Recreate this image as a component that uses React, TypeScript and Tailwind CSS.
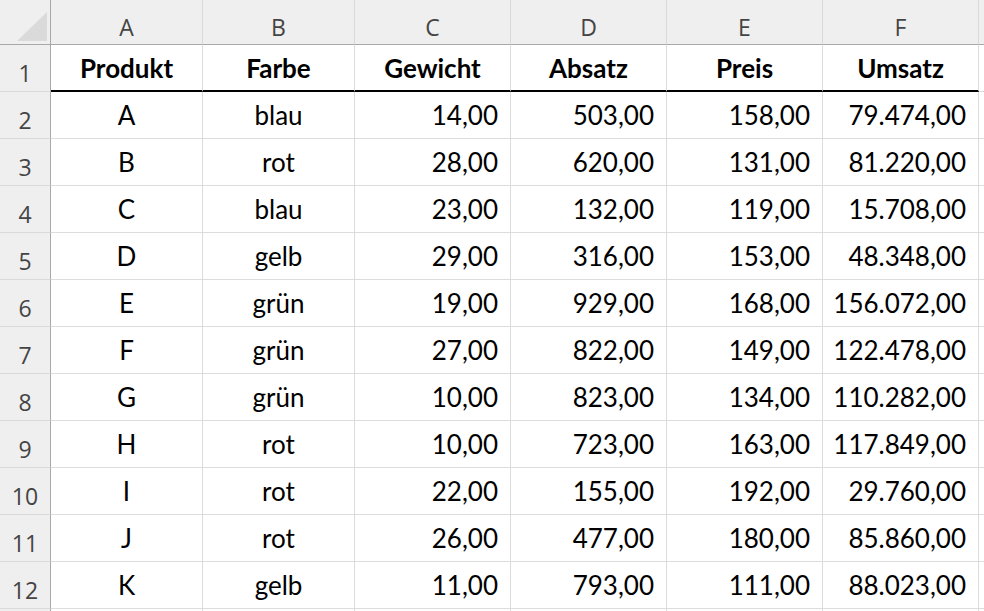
import React from 'react'

// sheet data, as shown in the workbook
const rows: [string, string, string, string, string, string][] = [
  ['A', 'blau', '14,00', '503,00', '158,00', '79.474,00'],
  ['B', 'rot', '28,00', '620,00', '131,00', '81.220,00'],
  ['C', 'blau', '23,00', '132,00', '119,00', '15.708,00'],
  ['D', 'gelb', '29,00', '316,00', '153,00', '48.348,00'],
  ['E', 'grün', '19,00', '929,00', '168,00', '156.072,00'],
  ['F', 'grün', '27,00', '822,00', '149,00', '122.478,00'],
  ['G', 'grün', '10,00', '823,00', '134,00', '110.282,00'],
  ['H', 'rot', '10,00', '723,00', '163,00', '117.849,00'],
  ['I', 'rot', '22,00', '155,00', '192,00', '29.760,00'],
  ['J', 'rot', '26,00', '477,00', '180,00', '85.860,00'],
  ['K', 'gelb', '11,00', '793,00', '111,00', '88.023,00'],
]

const letters = ['A', 'B', 'C', 'D', 'E', 'F']
const titles = ['Produkt', 'Farbe', 'Gewicht', 'Absatz', 'Preis', 'Umsatz']

const cols = 'grid grid-cols-[51px_152px_152px_156px_156px_156px_156px_1fr]'
const headFont = "font-['Open_Sans',sans-serif] text-[23px] leading-none text-[#444]"
const cellFont = "font-['Lato',sans-serif] text-[26px] leading-none text-black"

function RowHead({ n }: { n: number }) {
  return (
    <div className="flex items-end justify-center pb-[6px] bg-[#efefef] border-r border-b border-r-[#a8a8a8] border-b-[#d9d9d9]">
      <span className={headFont}>{n}</span>
    </div>
  )
}

export default function App() {
  return (
    <div className="w-[984px] h-[611px] overflow-hidden bg-white">
      {/* column letters */}
      <div className={`${cols} h-[45px]`}>
        <div className="relative bg-[#efefef] border-r border-b border-r-[#a8a8a8] border-b-[#a8a8a8]">
          <svg className="absolute left-[17px] top-[12px]" width="30" height="29" viewBox="0 0 30 29">
            <polygon points="30,0 30,29 0,29" fill="#dadada" />
          </svg>
        </div>
        {letters.map((l) => (
          <div key={l} className="flex items-end justify-center pb-[5px] bg-[#efefef] border-r border-b border-r-[#d9d9d9] border-b-[#a8a8a8]">
            <span className={headFont}>{l}</span>
          </div>
        ))}
        <div className="bg-[#efefef] border-b border-b-[#a8a8a8]" />
      </div>

      {/* row 1: titles */}
      <div className={`${cols} h-[47px]`}>
        <RowHead n={1} />
        {titles.map((t) => (
          <div key={t} className="flex items-end justify-center pb-[9px] border-r border-r-[#dcdcdc] border-b-2 border-b-black">
            <span className={`${cellFont} font-bold`}>{t}</span>
          </div>
        ))}
        <div className="border-b border-b-[#dcdcdc]" />
      </div>

      {rows.map((r, i) => (
        <div key={r[0]} className={`${cols} h-[47px]`}>
          <RowHead n={i + 2} />
          {r.map((v, j) => (
            <div
              key={j}
              className={`flex items-end pb-[10px] border-r border-b border-[#dcdcdc] ${j < 2 ? 'justify-center' : 'justify-end pr-[12px]'}`}
            >
              <span className={cellFont}>{v}</span>
            </div>
          ))}
          <div className="border-b border-b-[#dcdcdc]" />
        </div>
      ))}

      <div className={`${cols} h-[20px]`}>
        <div className="bg-[#efefef] border-r border-r-[#a8a8a8]" />
        {letters.map((l) => (
          <div key={l} className="border-r border-r-[#dcdcdc]" />
        ))}
        <div />
      </div>
    </div>
  )
}
